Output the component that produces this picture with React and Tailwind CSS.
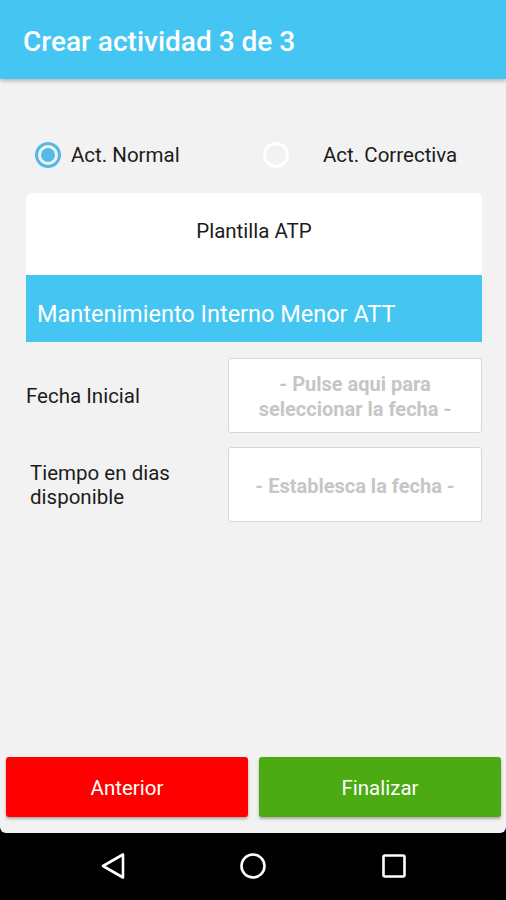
export default function App() {
  return (
    <div className="w-[506px] h-[900px] bg-black flex flex-col overflow-hidden" style={{ fontFamily: 'Roboto, "Noto Sans", sans-serif' }}>
      <div className="h-[79px] shrink-0 bg-[#45c6f2] flex items-center pl-[23px] pt-[4px] relative z-10 shadow-[0_2px_4px_rgba(0,0,0,0.25)]">
        <span className="text-white text-[28px] font-medium leading-none">Crear actividad 3 de 3</span>
      </div>
      <div className="h-[754px] shrink-0 bg-[#f2f2f2] rounded-b-[6px] flex flex-col">
        <div className="h-[40px] mt-[56px] flex items-center">
          <div className="flex items-center w-[250px] pl-[35px]">
            <div className="w-[26px] h-[26px] rounded-full border-[3px] border-[#55b9e6] flex items-center justify-center">
              <div className="w-[14px] h-[14px] rounded-full bg-[#55b9e6]" />
            </div>
            <span className="ml-[10px] text-[20.5px] text-[#1c1c1c]">Act. Normal</span>
          </div>
          <div className="flex items-center pl-[13px]">
            <div className="w-[26px] h-[26px] rounded-full border-[3px] border-white" />
            <span className="ml-[34px] text-[20.5px] text-[#1c1c1c]">Act. Correctiva</span>
          </div>
        </div>
        <div className="mt-[18px] mx-[26px] w-[456px] flex flex-col">
          <div className="h-[82px] bg-white rounded-t-[6px] flex items-center justify-center pb-[6px]">
            <span className="text-[20.5px] text-[#1c1c1c]">Plantilla ATP</span>
          </div>
          <div className="h-[67px] bg-[#45c6f2] flex items-center pl-[11px] pt-[13px]">
            <span className="text-white text-[23.5px]">Mantenimiento Interno Menor ATT</span>
          </div>
        </div>
        <div className="mt-[16px] flex items-center">
          <div className="w-[228px] pl-[26px] text-[20.5px] text-[#1c1c1c] leading-[24px] pt-[1px]">Fecha Inicial</div>
          <div className="w-[254px] h-[75px] bg-white border border-[#d6d6d6] rounded-[3px] flex items-center justify-center text-center pt-[3px]">
            <span className="text-[20px] font-bold text-[#c6c6c6] leading-[25px]">- Pulse aqui para<br />seleccionar la fecha -</span>
          </div>
        </div>
        <div className="mt-[14px] flex items-center">
          <div className="w-[228px] pl-[30px] text-[20.5px] text-[#1c1c1c] leading-[24px] pt-[1px]">Tiempo en dias<br />disponible</div>
          <div className="w-[254px] h-[75px] bg-white border border-[#d6d6d6] rounded-[3px] flex items-center justify-center text-center pt-[3px]">
            <span className="text-[20px] font-bold text-[#c6c6c6] leading-[25px]">- Establesca la fecha -</span>
          </div>
        </div>
        <div className="flex-1" />
        <div className="flex gap-[11px] pl-[6px] pr-[5px] pb-[16px]">
          <div className="w-[242px] h-[60px] bg-[#ff0000] rounded-[3px] shadow-[0_2px_3px_rgba(0,0,0,0.3)] flex items-center justify-center pt-[3px]">
            <span className="text-white text-[20.5px]">Anterior</span>
          </div>
          <div className="w-[242px] h-[60px] bg-[#4caa12] rounded-[3px] shadow-[0_2px_3px_rgba(0,0,0,0.3)] flex items-center justify-center pt-[3px]">
            <span className="text-white text-[20.5px]">Finalizar</span>
          </div>
        </div>
      </div>
      <div className="flex-1 relative">
        <svg className="absolute left-[100px] top-[19px]" width="26" height="28" viewBox="0 0 26 28">
          <path d="M23 2.5 L3 14 L23 25.5 Z" fill="none" stroke="white" strokeWidth="2.6" strokeLinejoin="round" />
        </svg>
        <svg className="absolute left-[239px] top-[19px]" width="28" height="28" viewBox="0 0 28 28">
          <circle cx="14" cy="14" r="11.5" fill="none" stroke="white" strokeWidth="2.6" />
        </svg>
        <svg className="absolute left-[381px] top-[20px]" width="26" height="26" viewBox="0 0 26 26">
          <rect x="2.5" y="2.5" width="21" height="21" rx="1.5" fill="none" stroke="white" strokeWidth="2.6" />
        </svg>
      </div>
    </div>
  );
}
